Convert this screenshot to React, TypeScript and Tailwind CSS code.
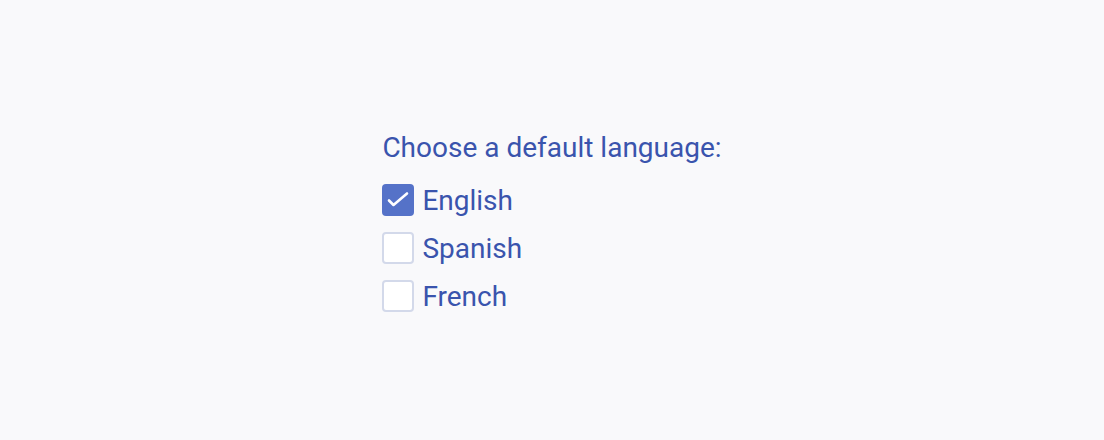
import React, { useState } from "react";

export default function App() {
  const [sel, setSel] = useState<Record<string, boolean>>({ English: true, Spanish: false, French: false });
  const langs = ["English", "Spanish", "French"];
  return (
    <div className="w-[1104px] h-[440px] bg-[#f9f9fb] flex items-center justify-center" style={{ fontFamily: "Roboto, sans-serif" }}>
      <div className="flex flex-col mt-[6px]">
        <div className="text-[28px] leading-[28px] text-[#3a54ad] mb-[22px]">Choose a default language:</div>
        <div className="flex flex-col gap-4">
          {langs.map((l) => (
            <label key={l} className="flex items-start h-8 gap-2 cursor-pointer" onClick={() => setSel({ ...sel, [l]: !sel[l] })}>
              {sel[l] ? (
                <span className="w-8 h-8 shrink-0 rounded-[4px] bg-[#5572c8] flex items-center justify-center">
                  <svg width="32" height="32" viewBox="0 0 32 32" fill="none">
                    <path d="M7 16.5l4.5 4.5L25 9.5" stroke="white" strokeWidth="2.6" strokeLinecap="round" strokeLinejoin="round" />
                  </svg>
                </span>
              ) : (
                <span className="w-8 h-8 shrink-0 rounded-[4px] bg-white border-2 border-[#d3d9ea]" />
              )}
              <span className="text-[28px] leading-[34px] text-[#3a54ad]">{l}</span>
            </label>
          ))}
        </div>
      </div>
    </div>
  );
}
